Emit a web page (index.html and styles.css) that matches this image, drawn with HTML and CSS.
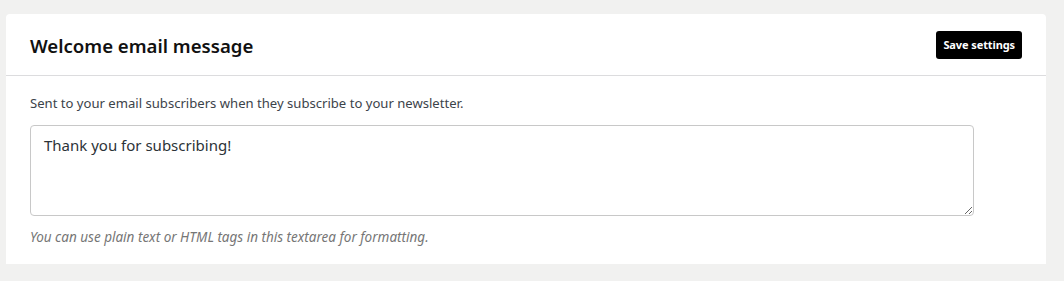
FILE: index.html
```html
<!DOCTYPE html>
<html lang="en">
<head>
    <meta charset="UTF-8">
    <meta name="viewport" content="width=device-width, initial-scale=1.0">
    <title>Welcome email message</title>
    <link rel="stylesheet" href="styles.css">
</head>
<body>
    <div class="card">
        <div class="card-header">
            <h2>Welcome email message</h2>
            <button class="save-btn">Save settings</button>
        </div>
        <div class="card-body">
            <p class="description">Sent to your email subscribers when they subscribe to your newsletter.</p>
            <textarea class="message" rows="4">Thank you for subscribing!</textarea>
            <p class="hint">You can use plain text or HTML tags in this textarea for formatting.</p>
        </div>
    </div>
</body>
</html>
```

FILE: styles.css
```css
body {
    font-family: "Noto Sans", "Open Sans", sans-serif;
    margin: 0;
    padding: 14px 18px 17px 6px;
    background-color: #f1f1f0;
    color: #333;
}
.card {
    background-color: #fff;
    border-radius: 4px 4px 0 0;
}
.card-header {
    display: flex;
    align-items: center;
    justify-content: space-between;
    height: 61px;
    padding: 0 24px;
    border-bottom: 1px solid #dcdcde;
}
.card-header h2 {
    margin: 0;
    padding-top: 2px;
    font-size: 18.6px;
    font-weight: 600;
    color: #111;
}
.save-btn {
    background-color: #000;
    color: #fff;
    border: none;
    border-radius: 3px;
    height: 28px;
    padding: 0 7px;
    font-family: inherit;
    font-size: 11px;
    font-weight: 700;
    letter-spacing: -0.1px;
    cursor: pointer;
}
.card-body {
    padding: 17px 72px 17px 24px;
}
.description {
    margin: 0 0 12px;
    font-size: 13.1px;
    line-height: 20px;
    color: #3c434a;
}
.message {
    display: block;
    box-sizing: border-box;
    width: 100%;
    height: 91px;
    padding: 8px 13px 6px;
    border: 1px solid #c8c8c8;
    border-radius: 4px;
    font-family: inherit;
    font-size: 15px;
    line-height: 22px;
    color: #2c3338;
}
.hint {
    margin: 11px 0 0;
    font-size: 13.5px;
    line-height: 20px;
    font-style: italic;
    color: #767676;
}
```
